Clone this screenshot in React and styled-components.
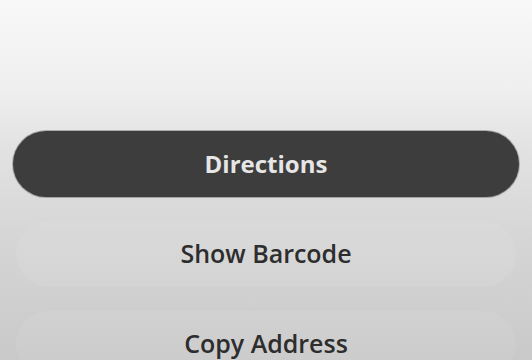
import React from "react";
import styled, { createGlobalStyle } from "styled-components";

const Global = createGlobalStyle`
  html, body { margin: 0; padding: 0; }
  body {
    width: 532px;
    height: 360px;
    overflow: hidden;
    font-family: "Open Sans", "Noto Sans", sans-serif;
    background: linear-gradient(180deg, #f8f8f8 0%, #efefef 25%, #e3e3e3 40%, #d6d6d6 65%, #c9c9c9 100%);
  }
`;

const Sheet = styled.div`
  display: flex;
  flex-direction: column;
  gap: 24px;
  padding: 131px 13px 0;
  height: 360px;
  box-sizing: border-box;
`;

const Action = styled.button`
  all: unset;
  box-sizing: border-box;
  display: flex;
  align-items: center;
  justify-content: center;
  height: 66px;
  border-radius: 33px;
  cursor: pointer;
  flex-shrink: 0;
  padding-bottom: 2px;
  background: ${(p) => (p.$primary ? "#3d3d3d" : "rgba(255,255,255,0.07)")};
  color: ${(p) => (p.$primary ? "#e6e6e6" : "#2d2d2d")};
  font-size: ${(p) => (p.$primary ? "24px" : "25px")};
  font-weight: ${(p) => (p.$primary ? 700 : 600)};
  margin: ${(p) => (p.$primary ? "0" : "0 3px")};
  box-shadow: ${(p) =>
    p.$primary ? "0 0 0 1px rgba(0,0,0,0.25)" : "none"};
`;

export default function App() {
  return (
    <>
      <Global />
      <Sheet>
        <Action $primary>Directions</Action>
        <Action>Show Barcode</Action>
        <Action>Copy Address</Action>
      </Sheet>
    </>
  );
}
